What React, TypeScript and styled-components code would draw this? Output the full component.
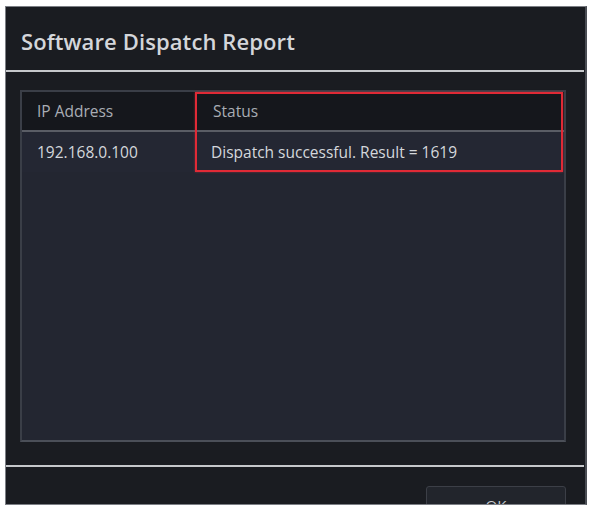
import React from "react";
import styled, { createGlobalStyle } from "styled-components";

const Global = createGlobalStyle`
  html, body { margin: 0; padding: 0; background: #ffffff; }
  body { font-family: "Open Sans", "Noto Sans", "Liberation Sans", sans-serif; }
`;

const Page = styled.div`
  width: 593px;
  height: 509px;
  overflow: hidden;
  box-sizing: border-box;
  padding: 6px 6px 4px 5px;
  background: #ffffff;
`;

const Dialog = styled.div`
  height: 100%;
  box-sizing: border-box;
  display: flex;
  flex-direction: column;
  background: #1a1c21;
  border: 1px solid #7c7f85;
  border-right: 2px solid #4a4d54;
  overflow: hidden;
  & > * { flex-shrink: 0; }
`;

const TitleBar = styled.div`
  height: 63px;
  display: flex;
  align-items: center;
  padding-left: 15px;
  padding-top: 4px;
  box-sizing: border-box;
`;

const Title = styled.h1`
  margin: 0;
  font-size: 22px;
  font-weight: 600;
  color: #d4d6da;
  letter-spacing: 0.1px;
`;

const Divider = styled.div`
  height: 2px;
  background: #c6c8cb;
  margin-right: 1px;
`;

const Content = styled.div`
  padding: 18px 19px 0 14px;
`;

const Table = styled.div`
  position: relative;
  height: 352px;
  box-sizing: border-box;
  background: #232631;
  border: 2px solid #3a3e47;
  border-bottom-color: #4b4f58;
  display: flex;
  flex-direction: column;
`;

const Row = styled.div<{ $header?: boolean }>`
  display: grid;
  grid-template-columns: 173px 1fr;
  height: ${(p) => (p.$header ? "38px" : "40px")};
  background: ${(p) => (p.$header ? "#15171c" : "#242733")};
  border-bottom: ${(p) => (p.$header ? "2px solid #5a5d65" : "none")};
  align-items: center;
`;

const Cell = styled.div<{ $header?: boolean; $divider?: boolean }>`
  height: 100%;
  display: flex;
  align-items: center;
  padding-left: ${(p) => (p.$divider ? "16px" : "15px")};
  font-size: 15.5px;
  color: ${(p) => (p.$header ? "#a9adb4" : "#d4d7dc")};
  border-left: ${(p) => (p.$divider && p.$header ? "2px solid #4a4d55" : "none")};
  box-sizing: border-box;
  white-space: nowrap;
`;

const Highlight = styled.div`
  position: absolute;
  left: 173px;
  top: 0px;
  width: 368px;
  height: 80px;
  box-sizing: border-box;
  border: 2px solid #e02a36;
  box-shadow: 0 0 2px rgba(230, 60, 70, 0.5);
  pointer-events: none;
`;

const Spacer = styled.div`
  height: 23px;
`;

const Footer = styled.div`
  display: flex;
  justify-content: flex-end;
  padding: 19px 19px 0 0;
`;

const Button = styled.button`
  width: 140px;
  height: 30px;
  background: #22252c;
  border: 1px solid #3c3f47;
  border-radius: 3px;
  color: #c9ccd1;
  font-family: inherit;
  font-size: 15px;
  padding-top: 8px;
`;

export default function App() {
  return (
    <>
      <Global />
      <Page>
        <Dialog>
          <TitleBar>
            <Title>Software Dispatch Report</Title>
          </TitleBar>
          <Divider />
          <Content>
            <Table>
              <Row $header>
                <Cell $header>IP Address</Cell>
                <Cell $header $divider>Status</Cell>
              </Row>
              <Row>
                <Cell>192.168.0.100</Cell>
                <Cell $divider>Dispatch successful. Result = 1619</Cell>
              </Row>
              <Highlight />
            </Table>
          </Content>
          <Spacer />
          <Divider />
          <Footer>
            <Button>OK</Button>
          </Footer>
        </Dialog>
      </Page>
    </>
  );
}
